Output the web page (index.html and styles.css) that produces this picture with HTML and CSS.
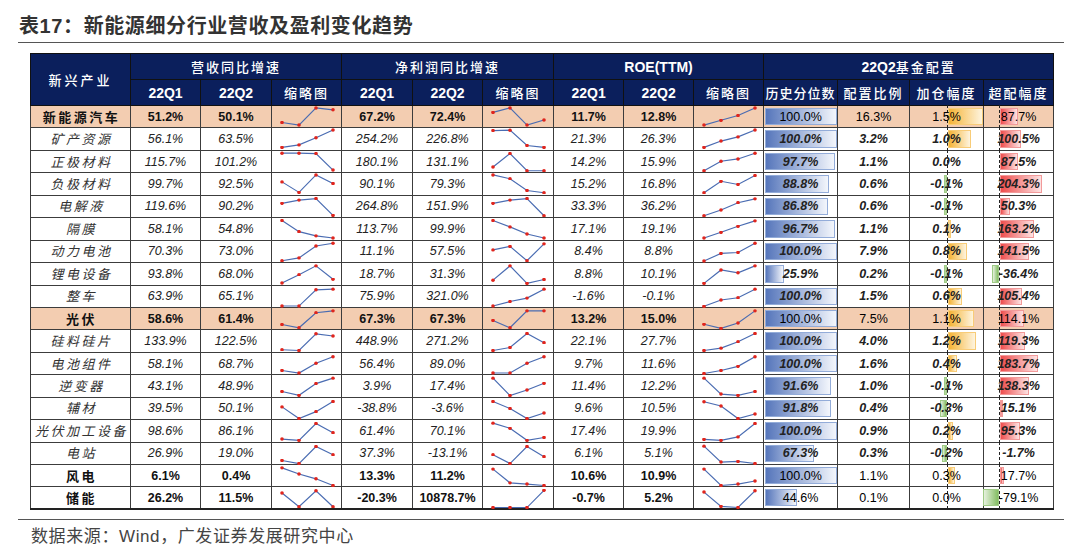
FILE: index.html
```html
<!DOCTYPE html>
<html lang="zh-CN">
<head>
<meta charset="utf-8">
<title>表17：新能源细分行业营收及盈利变化趋势</title>
<link rel="stylesheet" href="styles.css">
</head>
<body>
<svg class="defs" aria-hidden="true"><defs><marker id="dot" viewBox="0 0 4 4" refX="2" refY="2" markerWidth="3.6" markerHeight="3.6" markerUnits="userSpaceOnUse"><circle cx="2" cy="2" r="2" fill="#e0251d"/></marker></defs></svg>
<div class="page">
  <div class="title">表17：新能源细分行业营收及盈利变化趋势</div>
  <div class="table-wrap">
    <table class="grid">
      <colgroup>
        <col class="w100"><col class="w70"><col class="w71"><col class="w70"><col class="w71"><col class="w70"><col class="w71"><col class="w70"><col class="w70"><col class="w70"><col class="w74"><col class="w72"><col class="w74"><col class="w70">
      </colgroup>
      <thead>
        <tr>
          <th rowspan="2" class="hn">新兴产业</th>
          <th colspan="3">营收同比增速</th>
          <th colspan="3">净利润同比增速</th>
          <th colspan="3" class="lat">ROE(TTM)</th>
          <th colspan="4"><span class="latin">22Q2</span>基金配置</th>
        </tr>
        <tr>
          <th class="lat">22Q1</th><th class="lat">22Q2</th><th>缩略图</th>
          <th class="lat">22Q1</th><th class="lat">22Q2</th><th>缩略图</th>
          <th class="lat">22Q1</th><th class="lat">22Q2</th><th>缩略图</th>
          <th class="tight">历史分位数</th><th>配置比例</th><th>加仓幅度</th><th>超配幅度</th>
        </tr>
      </thead>
      <tbody>
        <tr class="main peach">
          <td class="name">新能源汽车</td><td>51.2%</td><td>50.1%</td>
          <td class="sp"><svg class="spark" viewBox="0 0 70 22" preserveAspectRatio="none"><polyline points="10,17.3 27,20 44,2 61,4"/></svg></td>
          <td>67.2%</td><td>72.4%</td>
          <td class="sp"><svg class="spark" viewBox="0 0 70 22" preserveAspectRatio="none"><polyline points="10,6.7 27,2 44,20 61,14.7"/></svg></td>
          <td>11.7%</td><td>12.8%</td>
          <td class="sp"><svg class="spark" viewBox="0 0 70 22" preserveAspectRatio="none"><polyline points="10,20 27,15 44,10 61,2"/></svg></td>
          <td class="f pct"><span class="bar" style="width:72px"></span><span class="v">100.0%</span></td>
          <td class="f">16.3%</td>
          <td class="f add"><span class="axis"></span><span class="pos" style="width:35px"></span><span class="v">1.5%</span></td>
          <td class="f over"><span class="axis"></span><span class="pos" style="width:18.1px"></span><span class="v">87.7%</span></td>
        </tr>
        <tr class="sub">
          <td class="name">矿产资源</td><td>56.1%</td><td>63.5%</td>
          <td class="sp"><svg class="spark" viewBox="0 0 70 22" preserveAspectRatio="none"><polyline points="10,20.3 27,17.7 44,10.3 61,2"/></svg></td>
          <td>254.2%</td><td>226.8%</td>
          <td class="sp"><svg class="spark" viewBox="0 0 70 22" preserveAspectRatio="none"><polyline points="10,2.7 27,2.3 44,18.3 61,20.3"/></svg></td>
          <td>21.3%</td><td>26.3%</td>
          <td class="sp"><svg class="spark" viewBox="0 0 70 22" preserveAspectRatio="none"><polyline points="10,20.3 27,13.7 44,9.3 61,2"/></svg></td>
          <td class="f pct"><span class="bar" style="width:72px"></span><span class="v">100.0%</span></td>
          <td class="f">3.2%</td>
          <td class="f add"><span class="axis"></span><span class="pos" style="width:23.3px"></span><span class="v">1.0%</span></td>
          <td class="f over"><span class="axis"></span><span class="pos" style="width:20.7px"></span><span class="v">100.5%</span></td>
        </tr>
        <tr class="sub">
          <td class="name">正极材料</td><td>115.7%</td><td>101.2%</td>
          <td class="sp"><svg class="spark" viewBox="0 0 70 22" preserveAspectRatio="none"><polyline points="10,2.3 27,2.3 44,2.7 61,20"/></svg></td>
          <td>180.1%</td><td>131.1%</td>
          <td class="sp"><svg class="spark" viewBox="0 0 70 22" preserveAspectRatio="none"><polyline points="10,16.7 27,2.7 44,20.7 61,20.7"/></svg></td>
          <td>14.2%</td><td>15.9%</td>
          <td class="sp"><svg class="spark" viewBox="0 0 70 22" preserveAspectRatio="none"><polyline points="10,20.7 27,10.7 44,8.3 61,2.3"/></svg></td>
          <td class="f pct"><span class="bar" style="width:70.3px"></span><span class="v">97.7%</span></td>
          <td class="f">1.1%</td>
          <td class="f add"><span class="axis"></span><span class="v">0.0%</span></td>
          <td class="f over"><span class="axis"></span><span class="pos" style="width:18px"></span><span class="v">87.5%</span></td>
        </tr>
        <tr class="sub">
          <td class="name">负极材料</td><td>99.7%</td><td>92.5%</td>
          <td class="sp"><svg class="spark" viewBox="0 0 70 22" preserveAspectRatio="none"><polyline points="10,9.3 27,20.3 44,2 61,11"/></svg></td>
          <td>90.1%</td><td>79.3%</td>
          <td class="sp"><svg class="spark" viewBox="0 0 70 22" preserveAspectRatio="none"><polyline points="10,2 27,6 44,18.3 61,20.7"/></svg></td>
          <td>15.2%</td><td>16.8%</td>
          <td class="sp"><svg class="spark" viewBox="0 0 70 22" preserveAspectRatio="none"><polyline points="10,20.7 27,8.7 44,12 61,2.7"/></svg></td>
          <td class="f pct"><span class="bar" style="width:64px"></span><span class="v">88.8%</span></td>
          <td class="f">0.6%</td>
          <td class="f add"><span class="axis"></span><span class="neg" style="width:3px"></span><span class="v">-0.1%</span></td>
          <td class="f over"><span class="axis"></span><span class="pos" style="width:42.1px"></span><span class="v">204.3%</span></td>
        </tr>
        <tr class="sub">
          <td class="name">电解液</td><td>119.6%</td><td>90.2%</td>
          <td class="sp"><svg class="spark" viewBox="0 0 70 22" preserveAspectRatio="none"><polyline points="10,7.7 27,4.3 44,2.7 61,20.3"/></svg></td>
          <td>264.8%</td><td>151.9%</td>
          <td class="sp"><svg class="spark" viewBox="0 0 70 22" preserveAspectRatio="none"><polyline points="10,7.7 27,4.3 44,2.7 61,20.7"/></svg></td>
          <td>33.3%</td><td>36.2%</td>
          <td class="sp"><svg class="spark" viewBox="0 0 70 22" preserveAspectRatio="none"><polyline points="10,20.7 27,14.7 44,7 61,3"/></svg></td>
          <td class="f pct"><span class="bar" style="width:62.5px"></span><span class="v">86.8%</span></td>
          <td class="f">0.6%</td>
          <td class="f add"><span class="axis"></span><span class="neg" style="width:3px"></span><span class="v">-0.1%</span></td>
          <td class="f over"><span class="axis"></span><span class="pos" style="width:10.4px"></span><span class="v">50.3%</span></td>
        </tr>
        <tr class="sub">
          <td class="name">隔膜</td><td>58.1%</td><td>54.8%</td>
          <td class="sp"><svg class="spark" viewBox="0 0 70 22" preserveAspectRatio="none"><polyline points="10,2.7 27,14.3 44,18.7 61,21"/></svg></td>
          <td>113.7%</td><td>99.9%</td>
          <td class="sp"><svg class="spark" viewBox="0 0 70 22" preserveAspectRatio="none"><polyline points="10,2.7 27,9.3 44,16.7 61,21"/></svg></td>
          <td>17.1%</td><td>19.1%</td>
          <td class="sp"><svg class="spark" viewBox="0 0 70 22" preserveAspectRatio="none"><polyline points="10,21 27,15 44,8.7 61,3"/></svg></td>
          <td class="f pct"><span class="bar" style="width:69.6px"></span><span class="v">96.7%</span></td>
          <td class="f">1.1%</td>
          <td class="f add"><span class="axis"></span><span class="pos" style="width:3px"></span><span class="v">0.1%</span></td>
          <td class="f over"><span class="axis"></span><span class="pos" style="width:33.6px"></span><span class="v">163.2%</span></td>
        </tr>
        <tr class="sub">
          <td class="name">动力电池</td><td>70.3%</td><td>73.0%</td>
          <td class="sp"><svg class="spark" viewBox="0 0 70 22" preserveAspectRatio="none"><polyline points="10,20.7 27,17.7 44,5.3 61,2.3"/></svg></td>
          <td>11.1%</td><td>57.5%</td>
          <td class="sp"><svg class="spark" viewBox="0 0 70 22" preserveAspectRatio="none"><polyline points="10,9.3 27,5.7 44,20.7 61,3"/></svg></td>
          <td>8.4%</td><td>8.8%</td>
          <td class="sp"><svg class="spark" viewBox="0 0 70 22" preserveAspectRatio="none"><polyline points="10,21 27,13 44,12 61,2.3"/></svg></td>
          <td class="f pct"><span class="bar" style="width:72px"></span><span class="v">100.0%</span></td>
          <td class="f">7.9%</td>
          <td class="f add"><span class="axis"></span><span class="pos" style="width:18.6px"></span><span class="v">0.8%</span></td>
          <td class="f over"><span class="axis"></span><span class="pos" style="width:29.1px"></span><span class="v">141.5%</span></td>
        </tr>
        <tr class="sub">
          <td class="name">锂电设备</td><td>93.8%</td><td>68.0%</td>
          <td class="sp"><svg class="spark" viewBox="0 0 70 22" preserveAspectRatio="none"><polyline points="10,21 27,12.3 44,3 61,17"/></svg></td>
          <td>18.7%</td><td>31.3%</td>
          <td class="sp"><svg class="spark" viewBox="0 0 70 22" preserveAspectRatio="none"><polyline points="10,18 27,3 44,21.3 61,17.3"/></svg></td>
          <td>8.8%</td><td>10.1%</td>
          <td class="sp"><svg class="spark" viewBox="0 0 70 22" preserveAspectRatio="none"><polyline points="10,21.3 27,7.3 44,10.3 61,3"/></svg></td>
          <td class="f pct"><span class="bar" style="width:18.6px"></span><span class="v">25.9%</span></td>
          <td class="f">0.2%</td>
          <td class="f add"><span class="axis"></span><span class="neg" style="width:3px"></span><span class="v">-0.1%</span></td>
          <td class="f over"><span class="axis"></span><span class="neg" style="width:7.5px"></span><span class="v">-36.4%</span></td>
        </tr>
        <tr class="sub">
          <td class="name">整车</td><td>63.9%</td><td>65.1%</td>
          <td class="sp"><svg class="spark" viewBox="0 0 70 22" preserveAspectRatio="none"><polyline points="10,21 27,21 44,4 61,3.3"/></svg></td>
          <td>75.9%</td><td>321.0%</td>
          <td class="sp"><svg class="spark" viewBox="0 0 70 22" preserveAspectRatio="none"><polyline points="10,21 27,16.3 44,12.7 61,3.3"/></svg></td>
          <td>-1.6%</td><td>-0.1%</td>
          <td class="sp"><svg class="spark" viewBox="0 0 70 22" preserveAspectRatio="none"><polyline points="10,21.3 27,14.7 44,12.3 61,3.3"/></svg></td>
          <td class="f pct"><span class="bar" style="width:72px"></span><span class="v">100.0%</span></td>
          <td class="f">1.5%</td>
          <td class="f add"><span class="axis"></span><span class="pos" style="width:14px"></span><span class="v">0.6%</span></td>
          <td class="f over"><span class="axis"></span><span class="pos" style="width:21.7px"></span><span class="v">105.4%</span></td>
        </tr>
        <tr class="main peach">
          <td class="name">光伏</td><td>58.6%</td><td>61.4%</td>
          <td class="sp"><svg class="spark" viewBox="0 0 70 22" preserveAspectRatio="none"><polyline points="10,17.3 27,20.7 44,5 61,3"/></svg></td>
          <td>67.3%</td><td>67.3%</td>
          <td class="sp"><svg class="spark" viewBox="0 0 70 22" preserveAspectRatio="none"><polyline points="10,13 27,20.7 44,3 61,3"/></svg></td>
          <td>13.2%</td><td>15.0%</td>
          <td class="sp"><svg class="spark" viewBox="0 0 70 22" preserveAspectRatio="none"><polyline points="10,17 27,21.3 44,15.7 61,3"/></svg></td>
          <td class="f pct"><span class="bar" style="width:72px"></span><span class="v">100.0%</span></td>
          <td class="f">7.5%</td>
          <td class="f add"><span class="axis"></span><span class="pos" style="width:25.6px"></span><span class="v">1.1%</span></td>
          <td class="f over"><span class="axis"></span><span class="pos" style="width:23.5px"></span><span class="v">114.1%</span></td>
        </tr>
        <tr class="sub">
          <td class="name">硅料硅片</td><td>133.9%</td><td>122.5%</td>
          <td class="sp"><svg class="spark" viewBox="0 0 70 22" preserveAspectRatio="none"><polyline points="10,20.7 27,21.5 44,4 61,6.3"/></svg></td>
          <td>448.9%</td><td>271.2%</td>
          <td class="sp"><svg class="spark" viewBox="0 0 70 22" preserveAspectRatio="none"><polyline points="10,21.5 27,18.3 44,3.7 61,13.3"/></svg></td>
          <td>22.1%</td><td>27.7%</td>
          <td class="sp"><svg class="spark" viewBox="0 0 70 22" preserveAspectRatio="none"><polyline points="10,21.5 27,19 44,12.3 61,3.7"/></svg></td>
          <td class="f pct"><span class="bar" style="width:72px"></span><span class="v">100.0%</span></td>
          <td class="f">4.0%</td>
          <td class="f add"><span class="axis"></span><span class="pos" style="width:28px"></span><span class="v">1.2%</span></td>
          <td class="f over"><span class="axis"></span><span class="pos" style="width:24.6px"></span><span class="v">119.3%</span></td>
        </tr>
        <tr class="sub">
          <td class="name">电池组件</td><td>58.1%</td><td>68.7%</td>
          <td class="sp"><svg class="spark" viewBox="0 0 70 22" preserveAspectRatio="none"><polyline points="10,18.3 27,21 44,10.7 61,4"/></svg></td>
          <td>56.4%</td><td>89.0%</td>
          <td class="sp"><svg class="spark" viewBox="0 0 70 22" preserveAspectRatio="none"><polyline points="10,21 27,21 44,10.7 61,4"/></svg></td>
          <td>9.7%</td><td>11.6%</td>
          <td class="sp"><svg class="spark" viewBox="0 0 70 22" preserveAspectRatio="none"><polyline points="10,21.5 27,18.3 44,14 61,4"/></svg></td>
          <td class="f pct"><span class="bar" style="width:72px"></span><span class="v">100.0%</span></td>
          <td class="f">1.6%</td>
          <td class="f add"><span class="axis"></span><span class="pos" style="width:9.3px"></span><span class="v">0.4%</span></td>
          <td class="f over"><span class="axis"></span><span class="pos" style="width:37.8px"></span><span class="v">183.7%</span></td>
        </tr>
        <tr class="sub">
          <td class="name">逆变器</td><td>43.1%</td><td>48.9%</td>
          <td class="sp"><svg class="spark" viewBox="0 0 70 22" preserveAspectRatio="none"><polyline points="10,17.3 27,21.3 44,9 61,3.3"/></svg></td>
          <td>3.9%</td><td>17.4%</td>
          <td class="sp"><svg class="spark" viewBox="0 0 70 22" preserveAspectRatio="none"><polyline points="10,3.3 27,21.5 44,15.7 61,8.7"/></svg></td>
          <td>11.4%</td><td>12.2%</td>
          <td class="sp"><svg class="spark" viewBox="0 0 70 22" preserveAspectRatio="none"><polyline points="10,3.3 27,20 44,21.3 61,17.3"/></svg></td>
          <td class="f pct"><span class="bar" style="width:66px"></span><span class="v">91.6%</span></td>
          <td class="f">1.0%</td>
          <td class="f add"><span class="axis"></span><span class="neg" style="width:3px"></span><span class="v">-0.1%</span></td>
          <td class="f over"><span class="axis"></span><span class="pos" style="width:28.5px"></span><span class="v">138.3%</span></td>
        </tr>
        <tr class="sub">
          <td class="name">辅材</td><td>39.5%</td><td>50.1%</td>
          <td class="sp"><svg class="spark" viewBox="0 0 70 22" preserveAspectRatio="none"><polyline points="10,9.3 27,21.5 44,14.3 61,3.7"/></svg></td>
          <td>-38.8%</td><td>-3.6%</td>
          <td class="sp"><svg class="spark" viewBox="0 0 70 22" preserveAspectRatio="none"><polyline points="10,3.7 27,11 44,21.5 61,15.7"/></svg></td>
          <td>9.6%</td><td>10.5%</td>
          <td class="sp"><svg class="spark" viewBox="0 0 70 22" preserveAspectRatio="none"><polyline points="10,4 27,8.3 44,21.5 61,16.7"/></svg></td>
          <td class="f pct"><span class="bar" style="width:66.1px"></span><span class="v">91.8%</span></td>
          <td class="f">0.4%</td>
          <td class="f add"><span class="axis"></span><span class="neg" style="width:7.5px"></span><span class="v">-0.3%</span></td>
          <td class="f over"><span class="axis"></span><span class="pos" style="width:3.1px"></span><span class="v">15.1%</span></td>
        </tr>
        <tr class="sub">
          <td class="name">光伏加工设备</td><td>98.6%</td><td>86.1%</td>
          <td class="sp"><svg class="spark" viewBox="0 0 70 22" preserveAspectRatio="none"><polyline points="10,20 27,21.3 44,3.7 61,13.3"/></svg></td>
          <td>61.4%</td><td>70.1%</td>
          <td class="sp"><svg class="spark" viewBox="0 0 70 22" preserveAspectRatio="none"><polyline points="10,3.3 27,8.7 44,21.3 61,18.3"/></svg></td>
          <td>17.4%</td><td>19.9%</td>
          <td class="sp"><svg class="spark" viewBox="0 0 70 22" preserveAspectRatio="none"><polyline points="10,20.3 27,21.3 44,17.7 61,3.7"/></svg></td>
          <td class="f pct"><span class="bar" style="width:72px"></span><span class="v">100.0%</span></td>
          <td class="f">0.9%</td>
          <td class="f add"><span class="axis"></span><span class="pos" style="width:4.7px"></span><span class="v">0.2%</span></td>
          <td class="f over"><span class="axis"></span><span class="pos" style="width:19.6px"></span><span class="v">95.3%</span></td>
        </tr>
        <tr class="sub">
          <td class="name">电站</td><td>26.9%</td><td>19.0%</td>
          <td class="sp"><svg class="spark" viewBox="0 0 70 22" preserveAspectRatio="none"><polyline points="10,18.3 27,21.5 44,3.7 61,12.3"/></svg></td>
          <td>37.3%</td><td>-13.1%</td>
          <td class="sp"><svg class="spark" viewBox="0 0 70 22" preserveAspectRatio="none"><polyline points="10,12.3 27,21.5 44,3.7 61,14.3"/></svg></td>
          <td>6.1%</td><td>5.1%</td>
          <td class="sp"><svg class="spark" viewBox="0 0 70 22" preserveAspectRatio="none"><polyline points="10,3.3 27,20 44,19.3 61,21.5"/></svg></td>
          <td class="f pct"><span class="bar" style="width:48.5px"></span><span class="v">67.3%</span></td>
          <td class="f">0.3%</td>
          <td class="f add"><span class="axis"></span><span class="neg" style="width:4.7px"></span><span class="v">-0.2%</span></td>
          <td class="f over"><span class="axis"></span><span class="v">-1.7%</span></td>
        </tr>
        <tr class="main">
          <td class="name">风电</td><td>6.1%</td><td>0.4%</td>
          <td class="sp"><svg class="spark" viewBox="0 0 70 22" preserveAspectRatio="none"><polyline points="10,3 27,9.5 44,14.5 61,21.5"/></svg></td>
          <td>13.3%</td><td>11.2%</td>
          <td class="sp"><svg class="spark" viewBox="0 0 70 22" preserveAspectRatio="none"><polyline points="10,4.3 27,18.7 44,20 61,21.5"/></svg></td>
          <td>10.6%</td><td>10.9%</td>
          <td class="sp"><svg class="spark" viewBox="0 0 70 22" preserveAspectRatio="none"><polyline points="10,4.3 27,21.5 44,20 61,16.7"/></svg></td>
          <td class="f pct"><span class="bar" style="width:72px"></span><span class="v">100.0%</span></td>
          <td class="f">1.1%</td>
          <td class="f add"><span class="axis"></span><span class="pos" style="width:7px"></span><span class="v">0.3%</span></td>
          <td class="f over"><span class="axis"></span><span class="pos" style="width:3.6px"></span><span class="v">17.7%</span></td>
        </tr>
        <tr class="main last">
          <td class="name">储能</td><td>26.2%</td><td>11.5%</td>
          <td class="sp"><svg class="spark" viewBox="0 0 70 22" preserveAspectRatio="none"><polyline points="10,6.3 27,20.7 44,4 61,20.7"/></svg></td>
          <td>-20.3%</td><td>10878.7%</td>
          <td class="sp"><svg class="spark" viewBox="0 0 70 22" preserveAspectRatio="none"><polyline points="10,21.5 27,21.5 44,21.5 61,3.5"/></svg></td>
          <td>-0.7%</td><td>5.2%</td>
          <td class="sp"><svg class="spark" viewBox="0 0 70 22" preserveAspectRatio="none"><polyline points="10,5.3 27,20.3 44,21.5 61,4"/></svg></td>
          <td class="f pct"><span class="bar" style="width:32.1px"></span><span class="v">44.6%</span></td>
          <td class="f">0.1%</td>
          <td class="f add"><span class="axis"></span><span class="v">0.0%</span></td>
          <td class="f over"><span class="axis"></span><span class="neg" style="width:16.3px"></span><span class="v">-79.1%</span></td>
        </tr>
      </tbody>
    </table>
  </div>
  <div class="source">数据来源：Wind，广发证券发展研究中心</div>
</div>
</body>
</html>
```

FILE: styles.css
```css
html, body {
  margin: 0;
  padding: 0;
  background: #ffffff;
}

body {
  font-family: "Liberation Sans", "Noto Sans CJK SC", sans-serif;
  color: #111;
}

.defs {
  position: absolute;
  width: 0;
  height: 0;
  overflow: hidden;
}

.page {
  width: 1080px;
  box-sizing: border-box;
  padding: 0 16px 0 18px;
}

.title {
  height: 43px;
  box-sizing: border-box;
  padding: 12px 0 0 1px;
  font-family: "Liberation Sans", "Noto Sans CJK SC", sans-serif;
  font-weight: bold;
  font-size: 20px;
  line-height: 28px;
  letter-spacing: 0.6px;
  color: #333;
  border-bottom: 1px solid #555;
}

.table-wrap {
  margin: 10px 0 0 12px;
}

.grid {
  border-collapse: collapse;
  table-layout: fixed;
  width: 1023px;
}

.w100 { width: 100px; }
.w70 { width: 70px; }
.w71 { width: 71px; }
.w72 { width: 72px; }
.w74 { width: 74px; }

.grid th {
  background: #0b1f5c;
  color: #ffffff;
  height: 25px;
  padding: 0;
  border: 1px solid #111;
  font-family: "Liberation Sans", "Noto Sans CJK SC", sans-serif;
  font-weight: 500;
  font-size: 13px;
  letter-spacing: 2px;
  text-align: center;
  white-space: nowrap;
  overflow: hidden;
}

.grid th.lat,
.grid th .latin {
  font-size: 14px;
  font-weight: bold;
  letter-spacing: 0;
}

.grid th.tight {
  letter-spacing: 1px;
}

.grid th.hn {
  letter-spacing: 3px;
}

.grid tbody tr {
  height: 22.44px;
}

.grid td {
  padding: 0;
  border: 1px solid #3c3c3c;
  text-align: center;
  font-size: 12.5px;
  line-height: 14px;
  white-space: nowrap;
  position: relative;
  color: #1a1a1a;
}

.grid .peach td {
  background: #f3cdb1;
}

.grid .sub td {
  font-style: italic;
  color: #222;
}

.grid .sub td.f {
  font-weight: bold;
}

.grid .main td {
  font-weight: bold;
  color: #111;
}

.grid .main td.f {
  font-weight: normal;
  color: #000;
}

.grid td.name {
  font-family: "Noto Sans CJK SC", sans-serif;
  font-size: 13px;
  letter-spacing: 2.5px;
  padding-left: 2px;
}

.grid .sub td.name {
  font-weight: normal;
  color: #333;
}

.grid .main td.name {
  font-weight: bold;
  color: #111;
}

.grid .last td {
  border-bottom: 2px solid #222;
}

.grid td.sp {
  vertical-align: top;
}

.spark {
  display: block;
  width: 70px;
  height: 21px;
  overflow: visible;
}

.spark polyline {
  fill: none;
  stroke: #4a6cb2;
  stroke-width: 1.2;
  marker-start: url(#dot);
  marker-mid: url(#dot);
  marker-end: url(#dot);
}

.v {
  position: relative;
}

.bar, .pos, .neg {
  position: absolute;
  top: 2px;
  bottom: 2px;
  box-sizing: border-box;
}

.pct .bar {
  left: 1px;
  background: linear-gradient(to right, #5676bb, #f3f6fc);
  border: 1px solid #93acd9;
}

.axis {
  position: absolute;
  top: -1px;
  bottom: -1px;
  border-left: 1px dashed #222;
}

.add .axis { left: 37px; }
.add .pos {
  left: 38px;
  background: linear-gradient(to right, #f5b335, #fef4de);
  border: 1px solid #f8cc78;
}
.add .neg {
  right: calc(100% - 37px);
  background: linear-gradient(to left, #84bd63, #e4f0dc);
  border: 1px solid #9fcb86;
}

.over .axis { left: 15px; }
.over .pos {
  left: 16px;
  background: linear-gradient(to right, #ee4d4d, #fde2e2);
  border: 1px solid #f29a9a;
}
.over .neg {
  right: calc(100% - 15px);
  background: linear-gradient(to left, #84bd63, #e6f1de);
  border: 1px solid #9fcb86;
}

.source {
  margin-top: 9px;
  border-top: 1px solid #555;
  padding: 6px 0 0 13px;
  font-family: "Liberation Sans", "Noto Sans CJK SC", sans-serif;
  font-size: 17px;
  line-height: 22px;
  letter-spacing: 0.6px;
  color: #444;
}
```
